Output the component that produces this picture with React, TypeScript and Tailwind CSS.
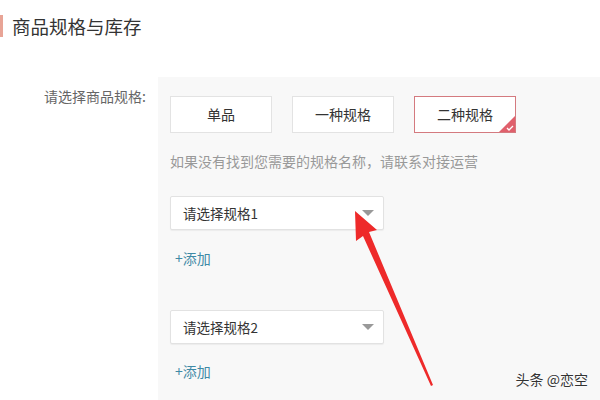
import React from "react";

const font = { fontFamily: '"Noto Sans CJK SC", "Noto Sans", sans-serif' };

function SpecButton({ label, selected }: { label: string; selected?: boolean }) {
  return (
    <div
      className={`relative flex h-[37px] w-[102px] items-center justify-center bg-white text-[14px] text-[#333] border ${
        selected ? "border-[#d47a7f]" : "border-[#e3e3e3]"
      }`}
    >
      {label}
      {selected && (
        <svg className="absolute bottom-0 right-0" width="16" height="16" viewBox="0 0 16 16">
          <path d="M16 0 L16 16 L0 16 Z" fill="#e0606c" />
          <path d="M8 12 L10 14 L14 10" stroke="#fff" strokeWidth="1.3" fill="none" />
        </svg>
      )}
    </div>
  );
}

function SelectBox({ label }: { label: string }) {
  return (
    <div className="flex h-[34px] w-[214px] items-center justify-between rounded-[2px] border border-[#e2e2e2] bg-white pl-[12px] pr-[9px] text-[13.5px] text-[#333] shadow-[0_1px_1px_rgba(0,0,0,0.05)]">
      <span>{label}</span>
      <svg width="12" height="7" viewBox="0 0 12 7">
        <path d="M0 0 L12 0 L6 6 Z" fill="#999" />
      </svg>
    </div>
  );
}

export default function App() {
  return (
    <div className="relative h-[400px] w-[600px] overflow-hidden bg-white" style={font}>
      <div className="flex h-[77px] items-start pt-[15px]">
        <div className="h-[22px] w-[3px] bg-[#e8a496]" />
        <div className="ml-[9px] text-[18.5px] leading-[22px] text-[#333]">商品规格与库存</div>
      </div>
      <div className="flex h-[323px]">
        <div className="w-[158px] pr-[12px] pt-[9px] text-right text-[14px] leading-[20px] text-[#666]">
          请选择商品规格:
        </div>
        <div className="flex flex-1 flex-col bg-[#f8f8f8] pl-[12px] pt-[19px]">
          <div className="flex gap-[20px]">
            <SpecButton label="单品" />
            <SpecButton label="一种规格" />
            <SpecButton label="二种规格" selected />
          </div>
          <div className="mt-[18px] text-[14px] leading-[20px] text-[#999]">
            如果没有找到您需要的规格名称，请联系对接运营
          </div>
          <div className="mt-[25px]">
            <SelectBox label="请选择规格1" />
          </div>
          <div className="mt-[18px] pl-[5px] text-[14px] leading-[20px] text-[#3f8aa6]">+添加</div>
          <div className="mt-[42px]">
            <SelectBox label="请选择规格2" />
          </div>
          <div className="mt-[17px] pl-[5px] text-[14px] leading-[20px] text-[#3f8aa6]">+添加</div>
        </div>
      </div>
      <svg className="pointer-events-none absolute left-0 top-0" width="600" height="400" viewBox="0 0 600 400">
        <path d="M355 211 L356 241 L363 236 L431 386 L433 385 L369 232 L377 230 Z" fill="#ee2a2a" />
      </svg>
      <div
        className="absolute right-[12px] top-[369px] text-[14px] leading-[20px] text-[#333]"
        style={{ textShadow: "0 0 2px #fff, 0 0 2px #fff" }}
      >
        头条 @恋空
      </div>
    </div>
  );
}
